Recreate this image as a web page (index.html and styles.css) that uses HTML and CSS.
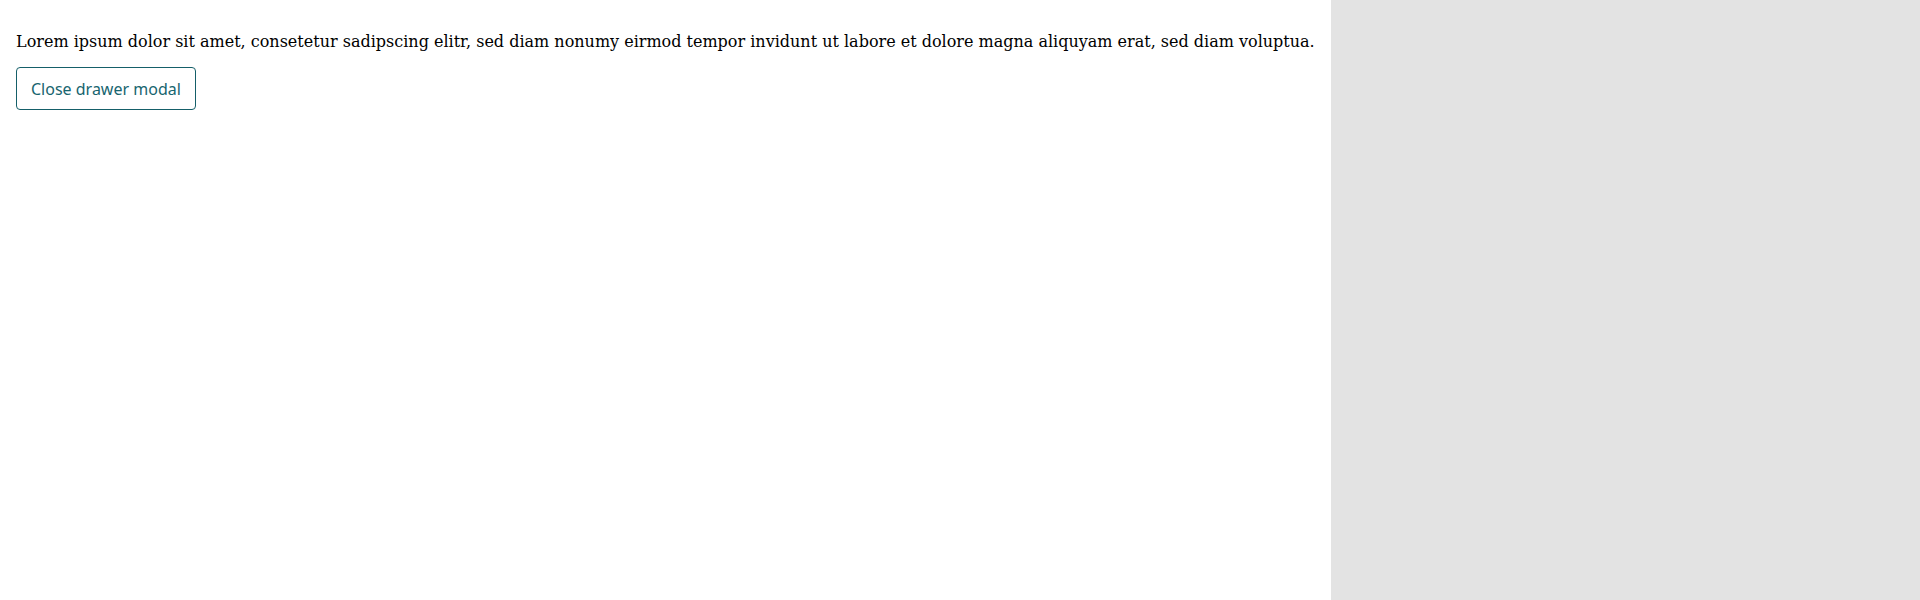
FILE: index.html
```html
<!DOCTYPE html>
<html lang="en">
<head>
<meta charset="utf-8">
<title>Drawer</title>
<link rel="stylesheet" href="styles.css">
</head>
<body>
<div class="layout">
  <main class="content">
    <p class="text">Lorem ipsum dolor sit amet, consetetur sadipscing elitr, sed diam nonumy eirmod tempor invidunt ut labore et dolore magna aliquyam erat, sed diam voluptua.</p>
    <button class="close-btn" type="button">Close drawer modal</button>
  </main>
  <aside class="drawer"></aside>
</div>
</body>
</html>
```

FILE: styles.css
```css
html, body {
  margin: 0;
  padding: 0;
  height: 100%;
  background: #ffffff;
}
.layout {
  display: flex;
  height: 100%;
}
.content {
  flex: 1;
  padding: 0 16px;
}
.text {
  font-family: "DejaVu Serif", serif;
  font-size: 16px;
  color: #000;
  margin: 32px 0 16px;
  line-height: normal;
}
.close-btn {
  display: block;
  box-sizing: border-box;
  height: 43px;
  padding: 0 14px;
  background: #fff;
  border: 1px solid #155f69;
  border-radius: 4px;
  color: #17656f;
  font-family: "Noto Sans", sans-serif;
  font-size: 16px;
  line-height: 24px;
}
.drawer {
  width: 589px;
  flex: none;
  background: #e3e3e3;
}
```
